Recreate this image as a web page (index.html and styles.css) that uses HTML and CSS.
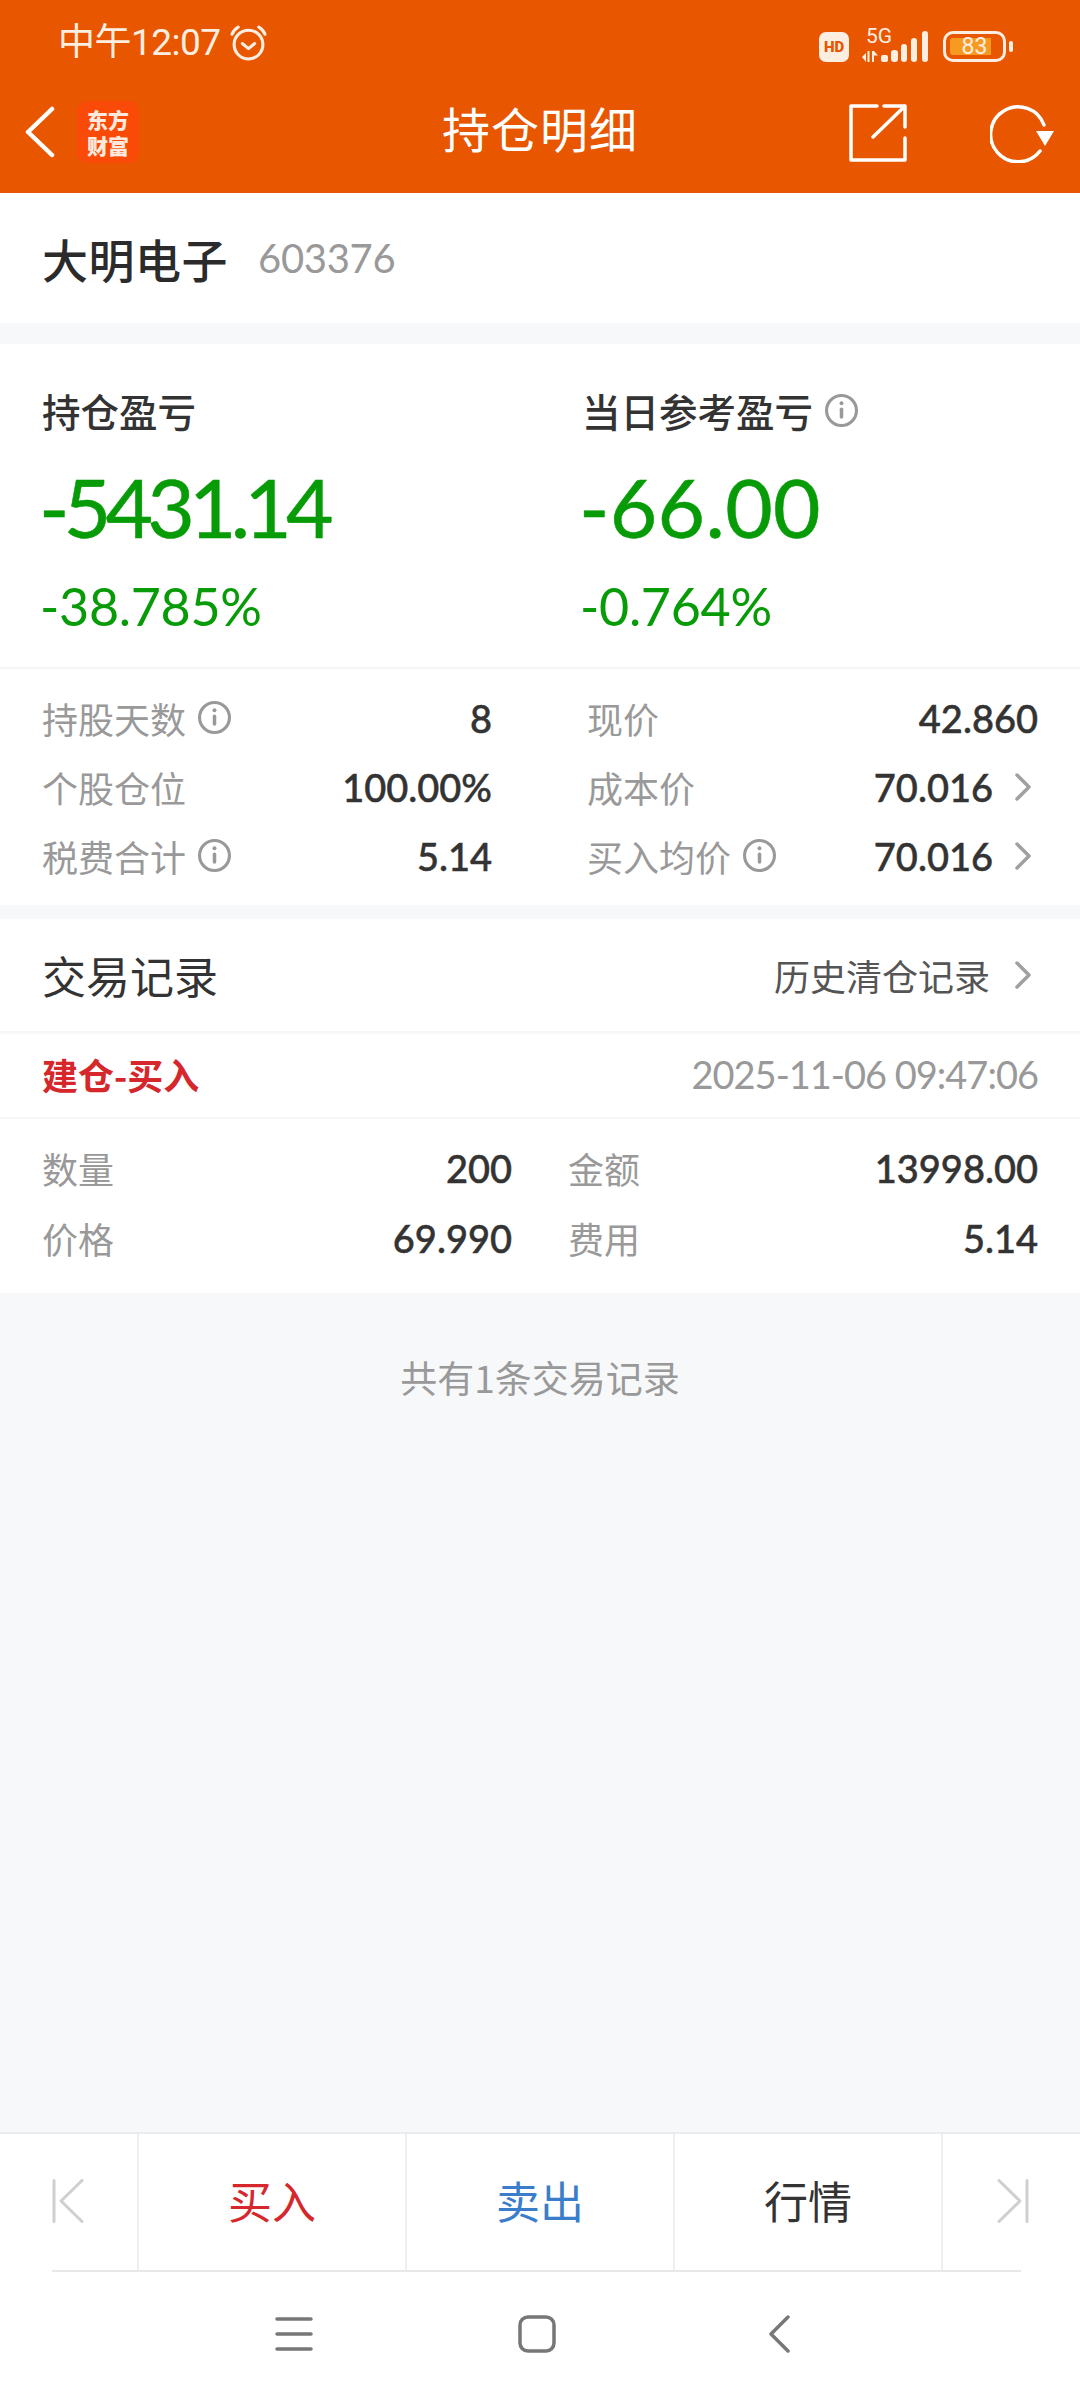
FILE: index.html
```html
<!DOCTYPE html>
<html lang="zh-CN">
<head>
<meta charset="utf-8">
<title>持仓明细</title>
<link rel="stylesheet" href="styles.css">
</head>
<body>
<div class="page">
  <header class="top">
    <div class="status">
      <div class="status-left">
        <span class="time">中午12:07</span>
        <svg class="alarm" viewBox="0 0 36 36" fill="none" stroke="#fdeee2" stroke-width="3" stroke-linecap="round" stroke-linejoin="round"><circle cx="18" cy="20" r="14"/><path d="M12 19l6 5 6-5"/><path d="M2 10c1-3 3-5 6-7M34 10c-1-3-3-5-6-7"/></svg>
      </div>
      <div class="status-right">
        <span class="hd">HD</span>
        <div class="net">
          <span class="fiveg">5G</span>
          <svg class="arrows" viewBox="0 0 17 11" fill="#fdeee2"><path d="M0 6l4-4v9zM5.500 0h2v11h-2zM10 0h2v11h-2zM12 0l4 4.500h-4z"/></svg>
        </div>
        <svg class="signal" viewBox="0 0 48 31" fill="#fdeee2"><rect x="0" y="24" width="7" height="7" rx="2"/><rect x="10" y="19" width="7" height="12" rx="3"/><rect x="20" y="13" width="6" height="18" rx="3"/><rect x="30" y="7" width="6" height="24" rx="3"/><rect x="41" y="0" width="6" height="31" rx="3"/></svg>
        <div class="battery"><div class="battery-fill"></div><span class="battery-num">83</span></div>
        <span class="battery-tip"></span>
      </div>
    </div>
    <div class="nav">
      <div class="nav-left">
        <svg class="back" viewBox="0 0 32 52" fill="none" stroke="#fff" stroke-width="4.500" stroke-linecap="round" stroke-linejoin="round"><path d="M28 3L4 26l24 23"/></svg>
        <div class="logo"><span>东方</span><span>财富</span></div>
      </div>
      <h1 class="title">持仓明细</h1>
      <div class="nav-right">
        <svg class="share" viewBox="0 0 58 58" fill="none" stroke="#fff" stroke-width="3.500" stroke-linecap="round" stroke-linejoin="round"><path d="M28 2H2v54h54V34"/><path d="M24 33L56 2M35 2h21v21"/></svg>
        <svg class="refresh" viewBox="0 0 64 60" fill="none" stroke="#fff" stroke-width="3.500" stroke-linecap="round"><path d="M50 48A27.500 27.500 0 1 1 54 22"/><path d="M46 28h18L55 43z" fill="#fff" stroke="none"/></svg>
      </div>
    </div>
  </header>

  <section class="stock">
    <span class="stock-name">大明电子</span>
    <span class="stock-code">603376</span>
  </section>

  <section class="summary">
    <div class="pnl-grid">
      <div class="pnl">
        <div class="pnl-label">持仓盈亏</div>
        <div class="pnl-value pnl-value-long">-5431.14</div>
        <div class="pnl-pct">-38.785%</div>
      </div>
      <div class="pnl">
        <div class="pnl-label">当日参考盈亏<svg class="info info-lg" viewBox="0 0 32 32"><use href="#i"/></svg></div>
        <div class="pnl-value">-66.00</div>
        <div class="pnl-pct">-0.764%</div>
      </div>
    </div>
    <div class="detail-grid">
      <div class="detail"><span class="k">持股天数<svg class="info" viewBox="0 0 32 32"><use href="#i"/></svg></span><span class="v">8</span></div>
      <div class="detail detail-r"><span class="k">现价</span><span class="v">42.860</span></div>
      <div class="detail"><span class="k">个股仓位</span><span class="v">100.00%</span></div>
      <div class="detail detail-r"><span class="k">成本价</span><span class="v v-arrow">70.016<svg class="chev" viewBox="0 0 16 28"><path d="M2 2l12 12L2 26"/></svg></span></div>
      <div class="detail"><span class="k">税费合计<svg class="info" viewBox="0 0 32 32"><use href="#i"/></svg></span><span class="v">5.14</span></div>
      <div class="detail detail-r"><span class="k">买入均价<svg class="info" viewBox="0 0 32 32"><use href="#i"/></svg></span><span class="v v-arrow">70.016<svg class="chev" viewBox="0 0 16 28"><path d="M2 2l12 12L2 26"/></svg></span></div>
    </div>
  </section>

  <section class="trades">
    <div class="trades-head">
      <span class="trades-title">交易记录</span>
      <span class="history">历史清仓记录<svg class="chev" viewBox="0 0 16 28"><path d="M2 2l12 12L2 26"/></svg></span>
    </div>
    <div class="trade-head">
      <span class="trade-type">建仓-买入</span>
      <span class="trade-time">2025-11-06 09:47:06</span>
    </div>
    <div class="trade-grid">
      <div class="tcell tcell-l"><span class="k">数量</span><span class="v">200</span></div>
      <div class="tcell"><span class="k">金额</span><span class="v">13998.00</span></div>
      <div class="tcell tcell-l"><span class="k">价格</span><span class="v">69.990</span></div>
      <div class="tcell"><span class="k">费用</span><span class="v">5.14</span></div>
    </div>
  </section>

  <main class="rest"><p class="count">共有1条交易记录</p></main>

  <footer class="tabs">
    <div class="tab tab-end">
      <svg class="skip" viewBox="0 0 32 44" fill="none" stroke="#cfcfcf" stroke-width="3" stroke-linecap="round" stroke-linejoin="round"><path d="M2 1.500v41M30 1.500L9 22l21 20.500"/></svg>
    </div>
    <div class="tab tab-main tab-buy">买入</div>
    <div class="tab tab-main tab-sell">卖出</div>
    <div class="tab tab-main">行情</div>
    <div class="tab tab-end tab-end-r">
      <svg class="skip" viewBox="0 0 32 44" fill="none" stroke="#cfcfcf" stroke-width="3" stroke-linecap="round" stroke-linejoin="round"><path d="M30 1.500v41M2 1.500L23 22 2 42.500"/></svg>
    </div>
  </footer>

  <nav class="sysnav">
    <svg class="sys sys-menu" viewBox="0 0 38 36" fill="none" stroke="#777" stroke-width="3.500" stroke-linecap="round"><path d="M2 3h34M2 18h34M2 33h34"/></svg>
    <svg class="sys sys-home" viewBox="0 0 38 38" fill="none" stroke="#777" stroke-width="3.500"><rect x="2" y="2" width="34" height="34" rx="8"/></svg>
    <svg class="sys sys-back" viewBox="0 0 22 38" fill="none" stroke="#777" stroke-width="3.500" stroke-linecap="round" stroke-linejoin="round"><path d="M19 2L2 19l17 17"/></svg>
  </nav>
</div>

<svg class="defs" aria-hidden="true"><defs><g id="i"><circle cx="16" cy="16" r="14.500" fill="none" stroke="#999" stroke-width="3"/><rect x="14.300" y="13" width="3.400" height="11" rx="1.700" fill="#999"/><circle cx="16" cy="9" r="1.900" fill="#999"/></g></defs></svg>
</body>
</html>
```

FILE: styles.css
```css
* { box-sizing: border-box; }
html, body { margin: 0; padding: 0; }
body {
  width: 1080px;
  height: 2400px;
  overflow: hidden;
  background: #f7f8fa;
  font-family: Lato, "Noto Sans CJK SC", sans-serif;
  color: #333;
}
.page { display: flex; flex-direction: column; height: 2400px; }
.defs { display: none; }

/* header */
.top { background: #e85600; height: 193px; color: #fff; }
.status { height: 84px; display: flex; justify-content: space-between; align-items: center; padding: 0 67px 0 58px; }
.status-left { display: flex; align-items: center; gap: 9px; }
.time { font-size: 37px; color: #fdeee2; line-height: 1; letter-spacing: -0.5px; font-family: Roboto, "Noto Sans CJK SC", sans-serif; }
.alarm { width: 37px; height: 37px; }
.status-right { display: flex; align-items: flex-end; margin-top: 4px; }
.hd { width: 30px; height: 30px; border-radius: 7px; background: #fdeee2; color: #e85600; font-size: 15px; font-weight: 900; display: flex; align-items: center; justify-content: center; font-family: Roboto, sans-serif; margin-right: 13px; }
.net { width: 19px; height: 35px; display: flex; flex-direction: column; align-items: flex-start; }
.fiveg { font-size: 21px; line-height: 19px; color: #fdeee2; font-family: Roboto, sans-serif; margin-left: 4px; }
.arrows { width: 17px; height: 11px; margin-top: 5px; flex: none; }
.signal { width: 48px; height: 31px; margin-right: 14px; }
.battery { position: relative; width: 63px; height: 31px; border: 3px solid #fdeee2; border-radius: 10px; }
.battery-fill { position: absolute; left: 4px; top: 4px; bottom: 4px; width: 41px; background: #f79a22; border-radius: 3px 0 0 3px; }
.battery-num { position: absolute; inset: 0; display: flex; align-items: center; justify-content: center; color: #fdeee2; font-size: 23px; line-height: 1; font-family: Roboto, sans-serif; }
.battery-tip { width: 4px; height: 11px; background: #fdeee2; border-radius: 2px; margin: 0 0 10px 3px; }

.nav { position: relative; height: 109px; display: flex; align-items: center; justify-content: space-between; padding: 0 26px 0 24px; }
.nav-left { display: flex; align-items: center; gap: 21px; margin-top: -14px; }
.back { width: 32px; height: 52px; }
.logo { width: 62px; height: 62px; border-radius: 10px; background: #fa4a07; display: flex; flex-direction: column; align-items: center; justify-content: center; font-family: "Noto Sans CJK SC", serif; font-weight: 900; font-size: 21px; line-height: 26px; color: #fde9dd; }
.title { position: absolute; left: 0; right: 0; text-align: center; margin: 0; font-size: 48px; font-weight: 400; letter-spacing: 1px; line-height: 1; top: 19px; font-family: "Noto Sans CJK SC", sans-serif; }
.nav-right { display: flex; align-items: center; gap: 83px; margin-top: -12px; }
.share { width: 58px; height: 58px; }
.refresh { width: 64px; height: 60px; }

/* stock */
.stock { height: 130px; background: #fff; display: flex; align-items: center; padding-left: 42px; gap: 30px; }
.stock-name { font-size: 46px; font-weight: 500; color: #2b2b2b; font-family: "Noto Sans CJK SC", sans-serif; letter-spacing: 0.5px; line-height: 1; }
.stock-code { font-size: 40px; color: #999; line-height: 1; letter-spacing: -0.300px; }

/* summary */
.summary { margin-top: 21px; background: #fff; height: 561px; }
.pnl-grid { display: grid; grid-template-columns: 540px 498px; height: 325px; border-bottom: 2px solid #f4f5f6; padding: 0 0 0 42px; }
.pnl { padding-top: 41px; }
.pnl-label { font-size: 38.500px; font-weight: 500; color: #333; height: 50px; display: flex; align-items: center; font-family: "Noto Sans CJK SC", sans-serif; }
.pnl-value { font-size: 82px; line-height: 1; color: #079b07; margin: 30px 0 0 -3px; letter-spacing: 0.300px; -webkit-text-stroke: 0.500px #079b07; }
.pnl-value-long { letter-spacing: -5.800px; }
.pnl-pct { font-size: 52px; line-height: 1; color: #079b07; margin: 33px 0 0 -2px; letter-spacing: -0.300px; }
.info { width: 33px; height: 33px; margin-left: 12px; }
.detail-grid { display: grid; grid-template-columns: 450px 451px; justify-content: space-between; grid-auto-rows: 69px; padding: 14px 42px 0 42px; }
.detail { display: flex; justify-content: space-between; align-items: center; }
.k { color: #999; font-size: 36px; display: flex; align-items: center; font-family: "Noto Sans CJK SC", sans-serif; }
.v { color: #333; font-size: 38px; font-weight: 500; display: flex; align-items: center; -webkit-text-stroke: 0.500px #333; }
.v-arrow { margin-right: 7px; }
.chev { width: 16px; height: 28px; margin-left: 22px; fill: none; stroke: #a0a0a0; stroke-width: 3.500; stroke-linecap: round; stroke-linejoin: round; }

/* trades */
.trades { margin-top: 14px; background: #fff; }
.trades-head { height: 115px; display: flex; justify-content: space-between; align-items: center; padding: 0 49px 0 42px; border-bottom: 3px solid #f6f7f9; }
.trades-title { font-size: 44px; color: #333; font-family: "Noto Sans CJK SC", sans-serif; line-height: 1; }
.history { font-size: 36px; color: #555; display: flex; align-items: center; font-family: "Noto Sans CJK SC", sans-serif; }
.history .chev { margin-left: 25px; }
.trade-head { height: 85px; display: flex; justify-content: space-between; align-items: center; padding: 0 42px 3px; border-bottom: 2px solid #f4f5f6; }
.trade-type { font-size: 36px; font-weight: 700; color: #d5272c; font-family: "Noto Sans CJK SC", sans-serif; }
.trade-time { font-size: 38px; color: #999; letter-spacing: -1px; }
.trade-grid { display: grid; grid-template-columns: 470px 470px; grid-auto-rows: 70px; justify-content: space-between; padding: 14px 42px 0; height: 174px; }
.tcell { display: flex; justify-content: space-between; align-items: center; }
.rest { flex: 1; background: #f7f8fa; }
.count { margin: 66px 0 0; text-align: center; font-size: 37px; color: #999; line-height: 1; font-family: "Noto Sans CJK SC", sans-serif; }

/* tabs */
.tabs { height: 138px; background: #fff; border-top: 2px solid #ececec; display: grid; grid-template-columns: 139px 268px 268px 268px 137px; }
.tab { display: flex; align-items: center; justify-content: center; font-size: 44px; color: #333; border-right: 2px solid #efefef; font-family: "Noto Sans CJK SC", sans-serif; padding-bottom: 5px; }
.tab-end { justify-content: flex-start; padding-left: 52px; padding-bottom: 2px; }
.tab-end-r { padding-left: 54px; border-right: 0; }
.tab-buy { color: #d5272c; }
.tab-sell { color: #3a7ecb; }
.skip { width: 32px; height: 44px; }

.sysnav { height: 130px; background: #fff; position: relative; display: flex; align-items: center; justify-content: center; padding-right: 14px; }
.sysnav::before { content: ""; position: absolute; top: 0; left: 52px; right: 59px; height: 2px; background: #e8e8e8; }
.sys-menu { width: 38px; height: 36px; margin-right: 205px; margin-top: -2px; }
.sys-home { width: 38px; height: 38px; margin-right: 213px; margin-top: -2px; }
.sys-back { width: 22px; height: 38px; margin-top: -2px; }
```
